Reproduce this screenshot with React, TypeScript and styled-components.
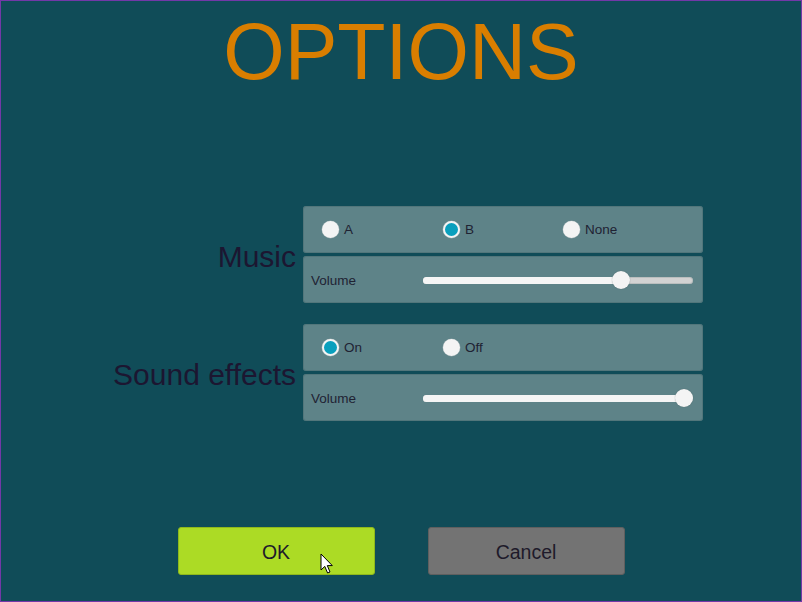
import React from "react";
import styled, { createGlobalStyle } from "styled-components";

const Global = createGlobalStyle`
  html, body { margin: 0; padding: 0; background: #104c58; }
  * { box-sizing: border-box; }
`;

const Screen = styled.div`
  width: 802px;
  height: 602px;
  border: 1px solid #7338a8;
  background: #104c58;
  display: flex;
  flex-direction: column;
  align-items: stretch;
  font-family: "Liberation Sans", Arial, sans-serif;
  padding-top: 11px;
`;

const Title = styled.h1`
  margin: 0;
  font-weight: 400;
  font-size: 79px;
  line-height: 80px;
  height: 80px;
  text-align: center;
  color: #d97e00;
`;

const Settings = styled.div`
  margin-top: 114px;
  display: grid;
  grid-template-columns: 1fr 400px;
  column-gap: 7px;
  row-gap: 21px;
  padding-right: 98px;
`;

const GroupLabel = styled.div`
  align-self: center;
  text-align: right;
  font-size: 30px;
  color: #1c1631;
  white-space: nowrap;
  line-height: 1;
  padding-top: 4px;
`;

const Group = styled.div`
  display: flex;
  flex-direction: column;
  gap: 3px;
`;

const Panel = styled.div`
  height: 47px;
  background: #5e8388;
  border-radius: 3px;
  box-shadow: inset 0 0 0 1px rgba(70, 105, 110, 0.5);
  display: flex;
  align-items: center;
  font-size: 13.5px;
  color: #1f2233;
`;

const RadioRow = styled(Panel)`
  display: grid;
  grid-template-columns: 121px 120px auto;
  padding-left: 19px;
`;

const RadioItem = styled.label`
  display: flex;
  align-items: center;
  gap: 5px;
`;

const RadioDot = styled.span<{ $on?: boolean }>`
  width: 17px;
  height: 17px;
  border-radius: 50%;
  background: ${(p) => (p.$on ? "#0a9fbd" : "#f4f4f4")};
  border: ${(p) => (p.$on ? "2.5px solid #f4f4f4" : "none")};
  box-shadow: 0 0 0 0.5px rgba(180, 190, 192, 0.6);
`;

const VolumeRow = styled(Panel)`
  display: grid;
  grid-template-columns: 112px 1fr;
  padding-left: 8px;
  padding-right: 10px;
`;

const VolumeText = styled.span`
  padding-top: 2px;
`;

const Track = styled.div`
  position: relative;
  height: 7px;
  margin-top: 1px;
  border-radius: 4px;
  background: #d2d2d2;
  box-shadow: inset 0 0 0 1px rgba(150, 160, 160, 0.4);
`;

const Fill = styled.div`
  height: 100%;
  border-radius: 4px;
  background: #f5f5f5;
`;

const Thumb = styled.div`
  position: absolute;
  top: 50%;
  width: 18px;
  height: 18px;
  margin-left: -9px;
  margin-top: -9px;
  border-radius: 50%;
  background: #f4f4f4;
  box-shadow: 0 0 1px rgba(60, 80, 80, 0.6);
`;

const Buttons = styled.div`
  margin-top: 106px;
  display: flex;
  justify-content: center;
  gap: 53px;
`;

const Button = styled.button<{ $primary?: boolean }>`
  position: relative;
  width: 197px;
  height: 48px;
  border-radius: 3px;
  border: 1px solid ${(p) => (p.$primary ? "#8fb81c" : "#5f5f5f")};
  background: ${(p) => (p.$primary ? "#acdb25" : "#737373")};
  color: #1e1a2a;
  font-family: "Liberation Sans", Arial, sans-serif;
  font-size: 19.5px;
  padding: 2px 0 0 0;
`;

const Cursor = styled.svg`
  position: absolute;
  left: 141px;
  top: 25px;
`;

function Slider({ value }: { value: number }) {
  const pos = `calc(9px + (100% - 18px) * ${value})`;
  return (
    <Track>
      <Fill style={{ width: pos }} />
      <Thumb style={{ left: pos }} />
    </Track>
  );
}

function Radio({ label, on }: { label: string; on?: boolean }) {
  return (
    <RadioItem>
      <RadioDot $on={on} />
      <span>{label}</span>
    </RadioItem>
  );
}

export default function App() {
  return (
    <>
      <Global />
      <Screen>
        <Title>OPTIONS</Title>
        <Settings>
          <GroupLabel>Music</GroupLabel>
          <Group>
            <RadioRow>
              <Radio label="A" />
              <Radio label="B" on />
              <Radio label="None" />
            </RadioRow>
            <VolumeRow>
              <VolumeText>Volume</VolumeText>
              <Slider value={0.75} />
            </VolumeRow>
          </Group>
          <GroupLabel>Sound effects</GroupLabel>
          <Group>
            <RadioRow>
              <Radio label="On" on />
              <Radio label="Off" />
            </RadioRow>
            <VolumeRow>
              <VolumeText>Volume</VolumeText>
              <Slider value={1} />
            </VolumeRow>
          </Group>
        </Settings>
        <Buttons>
          <Button $primary>
            OK
            <Cursor width="14" height="22" viewBox="0 0 14 22">
              <path
                d="M1 1 L1 17 L4.8 13.4 L7.6 20 L10 19 L7.3 12.6 L12.3 12.6 Z"
                fill="#ffffff"
                stroke="#000000"
                strokeWidth="1"
                strokeLinejoin="miter"
              />
            </Cursor>
          </Button>
          <Button>Cancel</Button>
        </Buttons>
      </Screen>
    </>
  );
}
